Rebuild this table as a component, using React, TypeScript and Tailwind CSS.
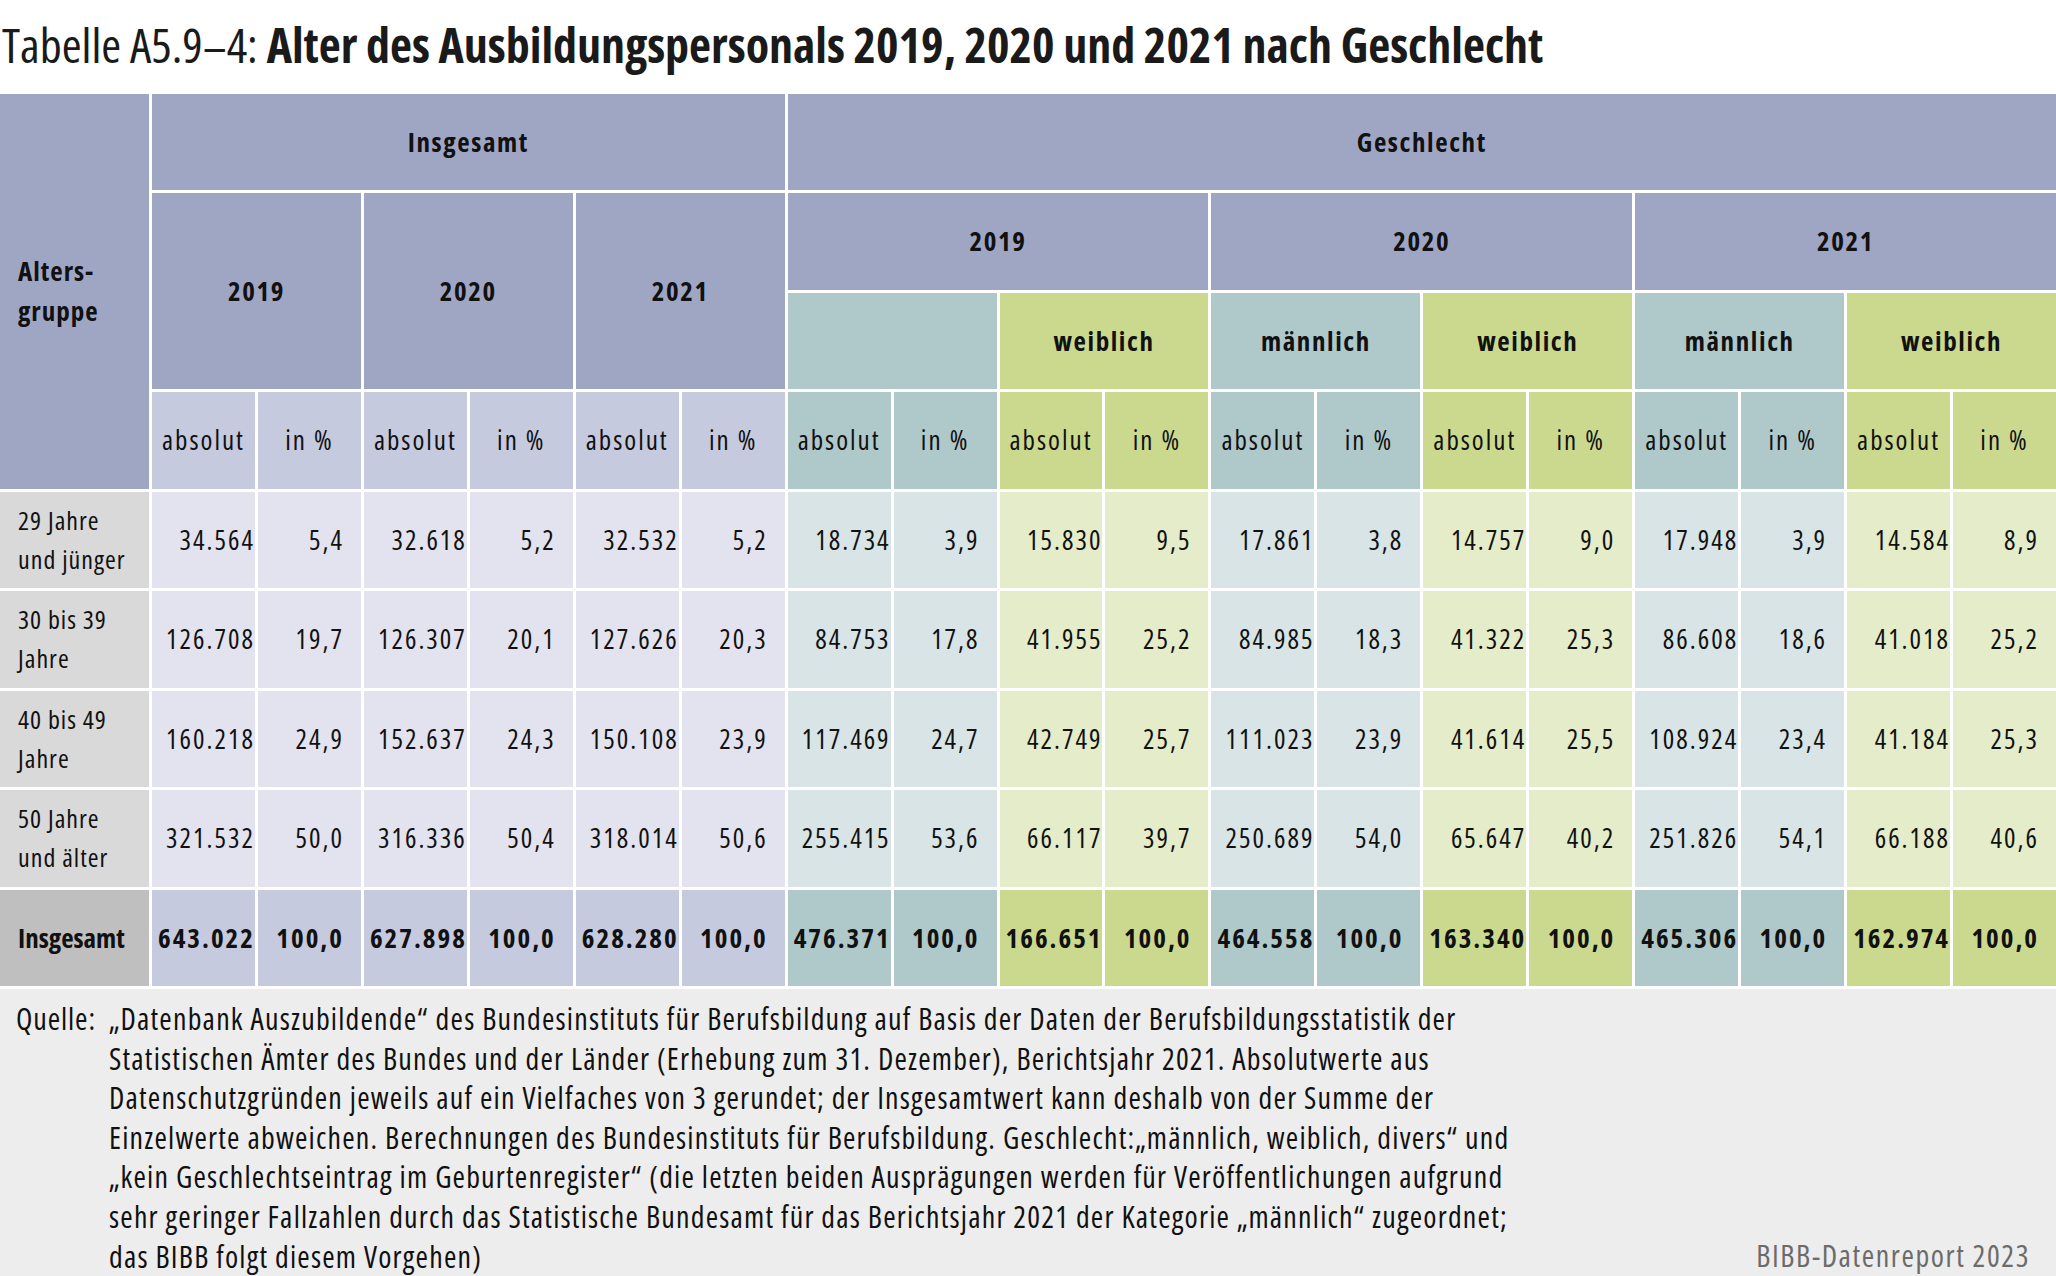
import React from 'react';

const rows = [
  { label: ['29 Jahre', 'und jünger'], v: ['34.564', '5,4', '32.618', '5,2', '32.532', '5,2', '18.734', '3,9', '15.830', '9,5', '17.861', '3,8', '14.757', '9,0', '17.948', '3,9', '14.584', '8,9'] },
  { label: ['30 bis 39', 'Jahre'], v: ['126.708', '19,7', '126.307', '20,1', '127.626', '20,3', '84.753', '17,8', '41.955', '25,2', '84.985', '18,3', '41.322', '25,3', '86.608', '18,6', '41.018', '25,2'] },
  { label: ['40 bis 49', 'Jahre'], v: ['160.218', '24,9', '152.637', '24,3', '150.108', '23,9', '117.469', '24,7', '42.749', '25,7', '111.023', '23,9', '41.614', '25,5', '108.924', '23,4', '41.184', '25,3'] },
  { label: ['50 Jahre', 'und älter'], v: ['321.532', '50,0', '316.336', '50,4', '318.014', '50,6', '255.415', '53,6', '66.117', '39,7', '250.689', '54,0', '65.647', '40,2', '251.826', '54,1', '66.188', '40,6'] },
];

const totals = ['643.022', '100,0', '627.898', '100,0', '628.280', '100,0', '476.371', '100,0', '166.651', '100,0', '464.558', '100,0', '163.340', '100,0', '465.306', '100,0', '162.974', '100,0'];

// colour of a data column: 0 = Insgesamt, 1 = männlich (teal), 2 = weiblich (green)
const kind = (i: number) => (i < 6 ? 0 : Math.floor((i - 6) / 2) % 2 === 0 ? 1 : 2);

const light = ['bg-[#e3e3ef]', 'bg-[#d8e4e5]', 'bg-[#e4ecc9]'];
const mid = ['bg-[#c5cadf]', 'bg-[#afc8c9]', 'bg-[#cbd98f]'];

const Num = ({ v, i, bold, bg }: { v: string; i: number; bold?: boolean; bg: string }) => (
  <div
    className={`${bg} flex items-center justify-end whitespace-nowrap tracking-[2px] ${i % 2 === 0 ? 'pr-0' : 'pr-[17px]'} ${bold ? 'font-bold' : ''}`}
  >
    {v}
  </div>
);

export default function App() {
  const sub = Array.from({ length: 18 }, (_, i) => i);

  return (
    <div className="w-[2056px] h-[1276px] bg-white text-[#111] font-['Open_Sans',sans-serif] font-stretch-condensed overflow-hidden">
      <div className="h-[94px] pt-[21px] pl-[2px] text-[48px] leading-none whitespace-nowrap text-[#1a1a1a]">
        Tabelle A5.9–4: <span className="font-bold">Alter des Ausbildungspersonals 2019, 2020 und 2021 nach Geschlecht</span>
      </div>

      <div className="grid grid-cols-[149px_repeat(18,minmax(0,1fr))] grid-rows-[repeat(9,minmax(0,1fr))] gap-[3px] h-[892px] text-[27px] tracking-[1.6px]">
        {/* header row 1 */}
        <div className="row-span-4 bg-[#9fa6c4] flex flex-col justify-center pl-[18px] font-bold leading-[40px] tracking-[1px]">
          <span>Alters-</span>
          <span>gruppe</span>
        </div>
        <div className="col-span-6 bg-[#9fa6c4] flex items-center justify-center font-bold">Insgesamt</div>
        <div className="col-span-12 bg-[#9fa6c4] flex items-center justify-center font-bold">Geschlecht</div>

        {/* header row 2 */}
        {['2019', '2020', '2021'].map((y) => (
          <div key={'i' + y} className="col-span-2 row-span-2 bg-[#9fa6c4] flex items-center justify-center font-bold">
            {y}
          </div>
        ))}
        {['2019', '2020', '2021'].map((y) => (
          <div key={'g' + y} className="col-span-4 bg-[#9fa6c4] flex items-center justify-center font-bold">
            {y}
          </div>
        ))}

        {/* header row 3 */}
        <div className="col-span-2 bg-[#afc8c9]" />
        <div className="col-span-2 bg-[#cbd98f] flex items-center justify-center font-bold">weiblich</div>
        <div className="col-span-2 bg-[#afc8c9] flex items-center justify-center font-bold">männlich</div>
        <div className="col-span-2 bg-[#cbd98f] flex items-center justify-center font-bold">weiblich</div>
        <div className="col-span-2 bg-[#afc8c9] flex items-center justify-center font-bold">männlich</div>
        <div className="col-span-2 bg-[#cbd98f] flex items-center justify-center font-bold">weiblich</div>

        {/* header row 4 */}
        {sub.map((i) => (
          <div key={'h' + i} className={`${mid[kind(i)]} flex items-center justify-center tracking-[2px]`}>
            {i % 2 === 0 ? 'absolut' : 'in %'}
          </div>
        ))}

        {/* data rows */}
        {rows.map((r) => (
          <React.Fragment key={r.label[0]}>
            <div className="bg-[#d9d9d9] flex flex-col justify-center pl-[18px] leading-[39px] whitespace-nowrap text-[26px] tracking-[1px]">
              <span>{r.label[0]}</span>
              <span>{r.label[1]}</span>
            </div>
            {r.v.map((v, i) => (
              <Num key={i} v={v} i={i} bg={light[kind(i)]} />
            ))}
          </React.Fragment>
        ))}

        {/* total row */}
        <div className="bg-[#bfbfbf] flex items-center pl-[18px] font-bold tracking-normal">Insgesamt</div>
        {totals.map((v, i) => (
          <Num key={'t' + i} v={v} i={i} bold bg={mid[kind(i)]} />
        ))}
      </div>

      <div className="mt-[3px] h-[287px] bg-[#ededed] pt-[10px] pl-[16px] pr-[26px] text-[30px] tracking-[1.2px] leading-[39.6px] flex justify-between items-end whitespace-nowrap">
        <div className="flex self-start">
          <div className="w-[93px] shrink-0 tracking-[0.9px]">Quelle:</div>
          <div>
            „Datenbank Auszubildende“ des Bundesinstituts für Berufsbildung auf Basis der Daten der Berufsbildungsstatistik der
            <br />
            Statistischen Ämter des Bundes und der Länder (Erhebung zum 31. Dezember), Berichtsjahr 2021. Absolutwerte aus
            <br />
            Datenschutzgründen jeweils auf ein Vielfaches von 3 gerundet; der Insgesamtwert kann deshalb von der Summe der
            <br />
            Einzelwerte abweichen. Berechnungen des Bundesinstituts für Berufsbildung. Geschlecht:„männlich, weiblich, divers“ und
            <br />
            „kein Geschlechtseintrag im Geburtenregister“ (die letzten beiden Ausprägungen werden für Veröffentlichungen aufgrund
            <br />
            sehr geringer Fallzahlen durch das Statistische Bundesamt für das Berichtsjahr 2021 der Kategorie „männlich“ zugeordnet;
            <br />
            das BIBB folgt diesem Vorgehen)
          </div>
        </div>
        <div className="text-[#6b6b6b] tracking-[1.6px]">BIBB-Datenreport 2023</div>
      </div>
    </div>
  );
}
